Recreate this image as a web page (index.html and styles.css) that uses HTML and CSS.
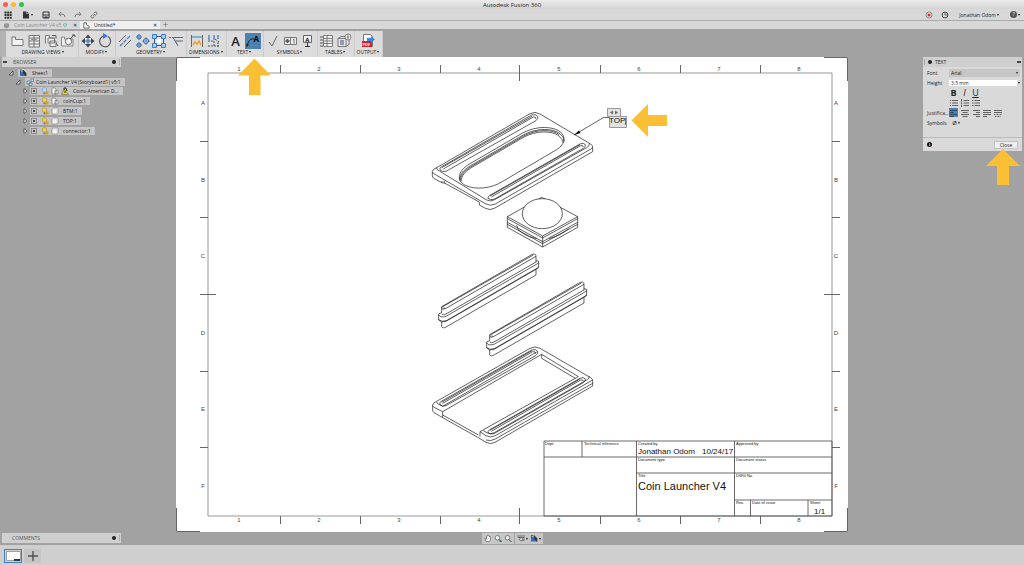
FILE: index.html
```html
<!DOCTYPE html>
<html lang="en">
<head>
  <meta charset="UTF-8">
  <title>Autodesk Fusion 360</title>
  <link rel="stylesheet" href="styles.css">
</head>
<body>
  <!-- shared icons -->
  <svg class="defs" aria-hidden="true">
    <symbol id="bulb" viewBox="0 0 8 8"><circle cx="3.4" cy="3" r="2.4" fill="#f4cf45" stroke="#8b8055" stroke-width=".5"/><path d="M2.5 5.5h2v1.8h-2z" fill="#777"/><path d="M4.5 4.5h3v3h-3z" fill="#d5a21d"/></symbol>
    <symbol id="bulb-off" viewBox="0 0 8 8"><circle cx="3.4" cy="3" r="2.4" fill="#bdd5f2" stroke="#6f86a8" stroke-width=".5"/><path d="M2.5 5.5h2v1.8h-2z" fill="#777"/><path d="M4.5 4.5h3v3h-3z" fill="#d5a21d"/></symbol>
    <symbol id="cube" viewBox="0 0 8 8"><path d="M1 2.2L2.3 1H7v4.8L5.8 7H1z" fill="#f5f5f5" stroke="#777" stroke-width=".6"/><path d="M1 2.3h4.7V7M5.7 2.3L7 1" fill="none" stroke="#ccc" stroke-width=".4"/></symbol>
    <symbol id="parts" viewBox="0 0 8 8"><path d="M1 1h3l1 1v5H1zM4 3.5h3V7H4z" fill="#f5f5f5" stroke="#666" stroke-width=".6"/></symbol>
    <symbol id="flag" viewBox="0 0 8 8"><path d="M1 1v6h6z" fill="#2b6fc4"/><path d="M1 1h2M1 3h1M4 1v3l3 3V4z" fill="#333" stroke="#333" stroke-width=".7"/></symbol>
    <symbol id="open" viewBox="0 0 6 6"><path d="M5 1v4H1z" fill="#ddd" stroke="#333" stroke-width=".7"/></symbol>
    <symbol id="shut" viewBox="0 0 6 6"><path d="M2 .6v4.8L5 3z" fill="#eee" stroke="#333" stroke-width=".7"/></symbol>
    <symbol id="lines" viewBox="0 0 8 8"><path d="M0 1.5h8M1.5 3.5h5M0 5.5h8M1.5 7.5h5" stroke="#444" stroke-width=".8"/></symbol>
  </svg>

  <header class="title-bar">
    <div class="lights"><i class="red"></i><i class="amber"></i><i class="green"></i></div>
    <h1>Autodesk Fusion 360</h1>
  </header>

  <div class="quick-bar">
    <button class="quick" aria-label="Data panel"><svg viewBox="0 0 8 8"><path d="M.5.5h2v2h-2zM3.1.5h2v2h-2zM5.7.5h2v2h-2zM.5 3.1h2v2h-2zM3.1 3.1h2v2h-2zM5.7 3.1h2v2h-2zM.5 5.7h2v2h-2zM3.1 5.7h2v2h-2zM5.7 5.7h2v2h-2z" fill="#333"/></svg></button>
    <button class="quick file" aria-label="File"><svg viewBox="0 0 8 8"><path d="M1 .5h3.5v2.6H7v4.4H1zM5.2.5L7 2.4H5.2z" fill="#333"/></svg><b class="caret"></b></button>
    <button class="quick" aria-label="Save"><svg viewBox="0 0 8 8"><path d="M1 1h6v6H1z" fill="none" stroke="#333" stroke-width="1"/><path d="M1 3.6h6v1H1zM2.5 5.5h3V7h-3z" fill="#333"/></svg></button>
    <button class="quick" aria-label="Undo"><svg viewBox="0 0 8 8"><path d="M3 1L1 3.2l2 2M1.2 3.2h3.5Q6.8 3.4 7 6" fill="none" stroke="#777" stroke-width="1"/></svg></button>
    <button class="quick" aria-label="Redo"><svg viewBox="0 0 8 8"><path d="M5 1l2 2.2-2 2M6.8 3.2H3.3Q1.2 3.4 1 6" fill="none" stroke="#777" stroke-width="1"/></svg></button>
    <button class="quick" aria-label="Link"><svg viewBox="0 0 8 8"><path d="M3.2 5l2-2M3.6 2.5L5 1.2q1-.6 1.7.2t0 1.7L5.2 4.5M4.4 5.5L3 6.8q-1 .6-1.7-.2t0-1.7l1.4-1.4" fill="none" stroke="#666" stroke-width=".9"/></svg></button>
    <div class="account">
      <button class="quick" aria-label="Record"><svg viewBox="0 0 8 8"><circle cx="4" cy="4" r="3" fill="#fff" stroke="#555" stroke-width=".7"/><circle cx="4" cy="4" r="1.6" fill="#e0242a"/></svg></button>
      <button class="quick" aria-label="Job status"><svg viewBox="0 0 8 8"><circle cx="4" cy="4" r="2.9" fill="none" stroke="#333" stroke-width=".9"/><path d="M4 2v2h2" fill="none" stroke="#333" stroke-width=".7"/></svg></button>
      <button class="user">Jonathan Odom <b class="caret"></b></button>
      <button class="help" aria-label="Help"><span>?</span><b class="caret"></b></button>
    </div>
  </div>

  <nav class="tabs">
    <a class="tab" href="#"><svg viewBox="0 0 8 8"><path d="M1 2l3-1 3 1v4L4 7.500 1 6z" fill="#999"/></svg><span>Coin Launcher V4 v5</span><i class="sync"></i><b>✕</b></a>
    <a class="tab active" href="#"><svg viewBox="0 0 8 8"><path d="M1 1v6h6V5L4 3V1z" fill="#fff" stroke="#444" stroke-width=".9"/></svg><span>Untitled*</span><b>✕</b></a>
    <button class="add-tab" aria-label="New tab">+</button>
  </nav>

  <div class="toolbar-row">
    <div class="toolbar">
      <section class="group">
        <div class="tools">
          <button aria-label="Base view"><svg viewBox="0 0 16 16"><path d="M3 12.500V4h3.500v2.500H14v6z" fill="#f1f1f1" stroke="#777"/></svg></button>
          <button aria-label="Projected view"><svg viewBox="0 0 16 16"><path d="M3 2.500h10.500v11.500H3z" fill="#eee" stroke="#777"/><path d="M3 5h10.500M3 8h10.500M3 11h10.500M8 2v12" stroke="#666" stroke-width=".9"/><path d="M5 6h6v1H5z" fill="#5b9bdc"/></svg></button>
          <button aria-label="Section view"><svg viewBox="0 0 16 16"><path d="M2.500 10.500v-8h4v2.500H11M5 5h6.500v5H5zM7 8h6v5.500H7z" fill="#eee" stroke="#777"/><path d="M9 2.500h4v3M13 10l2 3" fill="none" stroke="#555"/></svg></button>
          <button aria-label="Detail view"><svg viewBox="0 0 16 16"><path d="M1.500 13V4h3v2H13v7z" fill="#eee" stroke="#888"/><circle cx="8.500" cy="8.500" r="3.200" fill="#f4f4f4" stroke="#666"/><path d="M10.500 6l3-4M12 2h3v2" fill="none" stroke="#555"/></svg></button>
        </div>
        <button class="group-name">DRAWING VIEWS <b class="caret"></b></button>
      </section>
      <section class="group">
        <div class="tools">
          <button aria-label="Move"><svg viewBox="0 0 16 16"><path d="M8 3v10M3 8h10" stroke="#777"/><path d="M8 1.500L11 5H5zM8 14.500L11 11H5zM1.500 8L5 5v6zM14.500 8L11 5v6z" fill="#3c4654"/><path d="M6.500 6.500h3v3h-3z" fill="#4b8ed8"/></svg></button>
          <button aria-label="Rotate"><svg viewBox="0 0 16 16"><path d="M11 3.600A5.500 5.500 0 1 1 6 3.200" fill="none" stroke="#555" stroke-width="1.200"/><path d="M6 0l5 3-5 3z" fill="#2f7de0"/></svg></button>
        </div>
        <button class="group-name">MODIFY <b class="caret"></b></button>
      </section>
      <section class="group">
        <div class="tools">
          <button aria-label="Centerline"><svg viewBox="0 0 16 16"><path d="M2 9l7-7M7 14l7-7" stroke="#666"/><path d="M3 13L13 3" stroke="#2f7de0" stroke-width="1.200" stroke-dasharray="4 1"/></svg></button>
          <button aria-label="Center mark"><svg viewBox="0 0 16 16"><g fill="#dbe7f5" stroke="#4d5c70"><circle cx="5" cy="4" r="2"/><circle cx="12" cy="8" r="2.500"/><circle cx="5" cy="12" r="2"/></g><path d="M2 4h6M5 1v6M2 12h6M5 9v6M8 8h8M12 4v8" stroke="#2f7de0" stroke-width=".8"/></svg></button>
          <button aria-label="Center mark pattern"><svg viewBox="0 0 16 16"><path d="M3.500 3.500h9v9h-9z" fill="#ddd" stroke="#555"/><path d="M1.500 1.500h4v4h-4zM10.500 1.500h4v4h-4zM1.500 10.500h4v4h-4zM10.500 10.500h4v4h-4z" fill="#a9cdf5" stroke="#2f7de0"/><circle cx="8" cy="8" r="2.500" fill="#fff"/></svg></button>
          <button aria-label="Edge extension"><svg viewBox="0 0 16 16"><path d="M6 4.500h9M8 8h7M6 6l4 7" fill="none" stroke="#666"/><path d="M1 4.500h5M5 4.500l4 6" stroke="#2f7de0" stroke-dasharray="2 1"/></svg></button>
        </div>
        <button class="group-name">GEOMETRY <b class="caret"></b></button>
      </section>
      <section class="group">
        <div class="tools">
          <button aria-label="Dimension"><svg viewBox="0 0 16 16"><path d="M2.500 2v12M13.500 2v12" stroke="#666"/><path d="M3 4h10" stroke="#2f7de0"/><path d="M4 12l2-3 2 2 2-3 2 4" fill="none" stroke="#e4a52b" stroke-width="1.500"/></svg></button>
          <button aria-label="Ordinate"><svg viewBox="0 0 16 16"><path d="M3 2v5M8 2v5M12 2v4" stroke="#2f7de0" stroke-width="1.300"/><path d="M2 8h6v6M9 6l4 3M2 13h12M12 9v5" fill="none" stroke="#555" stroke-dasharray="2 1"/></svg></button>
        </div>
        <button class="group-name">DIMENSIONS <b class="caret"></b></button>
      </section>
      <section class="group">
        <div class="tools">
          <button class="letter">A</button>
          <button class="active" aria-label="Leader text"><svg viewBox="0 0 16 16"><path d="M2 13Q4 6 7 6h2" fill="none" stroke="#222"/><path d="M1.500 14.500l0-4 2.500 1z" fill="#222"/><text x="8.500" y="8.500" class="mini-a">A</text></svg></button>
        </div>
        <button class="group-name">TEXT <b class="caret"></b></button>
      </section>
      <section class="group">
        <div class="tools">
          <button aria-label="Surface texture"><svg viewBox="0 0 16 16"><path d="M4 9l3 4 5-10" fill="none" stroke="#666"/></svg></button>
          <button aria-label="Feature control frame"><svg viewBox="0 0 16 16"><path d="M2.500 4.500h12v7h-12zM8.500 4v8" fill="#eee" stroke="#777"/><circle cx="5.500" cy="8" r="1.500" fill="none" stroke="#333" stroke-width=".7"/><path d="M3.500 8h4M5.500 6v4M11 6.500h1v4" fill="none" stroke="#333" stroke-width=".7"/></svg></button>
          <button aria-label="Datum"><svg viewBox="0 0 16 16"><path d="M4.500 2.500h8v7h-8z" fill="#f3f3f3" stroke="#666"/><path d="M8.500 9.500V13M6 13.500h5" stroke="#333"/><text x="6.200" y="8.500" class="datum-a">A</text></svg></button>
        </div>
        <button class="group-name">SYMBOLS <b class="caret"></b></button>
      </section>
      <section class="group">
        <div class="tools">
          <button aria-label="Parts list"><svg viewBox="0 0 16 16"><path d="M4.500 2.500h9v11h-9zM4.500 5.500h9M4.500 8h9M4.500 10.500h9M8 2.500v11" fill="#f1f1f1" stroke="#666" stroke-width=".8"/><path d="M1 4h3M1 7h3M1 10h3M1 13h3" stroke="#555"/></svg></button>
          <button aria-label="Balloon"><svg viewBox="0 0 16 16"><path d="M2 5.500l3-2h8v8l-3 2H2zM2 5.500h8v8" fill="#e7e9ec" stroke="#777"/><path d="M4 7h4v5H4z" fill="#8c9bb0"/><circle cx="12" cy="4" r="3" fill="#eee" stroke="#666" stroke-width=".8"/><path d="M12 2.500v3" stroke="#333"/></svg></button>
        </div>
        <button class="group-name">TABLES <b class="caret"></b></button>
      </section>
      <section class="group">
        <div class="tools">
          <button aria-label="Output PDF"><svg viewBox="0 0 16 16"><path d="M3.500 1.500h7l2 2v10h-9z" fill="#fff" stroke="#777"/><path d="M2 8h10v6H2z" fill="#d3202a"/><path d="M7 5h4V3l4 3.500-4 3V8H7z" fill="#2f8be6"/><text x="2.500" y="13" class="pdf">PDF</text></svg></button>
        </div>
        <button class="group-name">OUTPUT <b class="caret"></b></button>
      </section>
    </div>
  </div>

  <main class="workspace">
    <aside class="left">
      <div class="browser">
        <div class="panel-head"><b class="collapse"></b><h2>BROWSER</h2><i class="dot"></i><i class="grip"></i></div>
        <ul class="tree">
          <li class="node"><svg><use href="#open"/></svg><span class="chip root"><svg class="ico"><use href="#flag"/></svg>Sheet1</span></li>
          <li class="node level-1"><svg><use href="#open"/></svg><span class="chip"><svg class="ico" viewBox="0 0 8 8"><path d="M1 3h3v3H1zM3 5h3v2.500H3zM5 1h2.500v2.500H5z" fill="#dce9f7" stroke="#3f6c9f" stroke-width=".7"/></svg>Coin Launcher V4 (Storyboard1) v5:1</span></li>
          <li>
            <ul class="children">
              <li class="node"><svg><use href="#shut"/></svg><label class="chip"><input type="checkbox" checked><svg class="ico"><use href="#bulb-off"/></svg><svg class="ico"><use href="#parts"/></svg><svg class="ico" viewBox="0 0 8 8"><path d="M.5 7.500L3 2l4.500 5.500z" fill="#e8d31d" stroke="#555" stroke-width=".5"/><path d="M3 3V1h2l1 3M4 4v2" fill="none" stroke="#222" stroke-width=".9"/></svg><span>Coins-American D...</span></label></li>
              <li class="node"><svg><use href="#shut"/></svg><label class="chip"><input type="checkbox" checked><svg class="ico"><use href="#bulb"/></svg><svg class="ico"><use href="#parts"/></svg><span>coinCup:1</span></label></li>
              <li class="node"><svg><use href="#shut"/></svg><label class="chip"><input type="checkbox" checked><svg class="ico"><use href="#bulb"/></svg><svg class="ico"><use href="#cube"/></svg><span>BTM:1</span></label></li>
              <li class="node"><svg><use href="#shut"/></svg><label class="chip"><input type="checkbox" checked><svg class="ico"><use href="#bulb"/></svg><svg class="ico"><use href="#cube"/></svg><span>TOP:1</span></label></li>
              <li class="node"><svg><use href="#shut"/></svg><label class="chip"><input type="checkbox" checked><svg class="ico"><use href="#bulb"/></svg><svg class="ico"><use href="#cube"/></svg><span>connector:1</span></label></li>
            </ul>
          </li>
        </ul>
      </div>
      <div class="panel-head comments"><h2>COMMENTS</h2><i class="dot"></i><i class="grip"></i></div>
    </aside>

    <div class="center">
      <svg class="sheet" viewBox="176 57 672 475">
        <path d="M176 57h672v475H176z" fill="#fff"/>
        <path class="crop" d="M200 57.500h-23.500V81M824 57.500h23.500V81M200 531.500h-23.500V508M824 531.500h23.500V508"/>
        <path class="frame" d="M208 73h624v443H208z"/>
        <path class="tick" d="M280.500 65v8M360.500 65v8M440.500 65v8M519.500 65v16M600.500 65v8M680.500 65v8M760.500 65v8M280.500 516v8M360.500 516v8M440.500 516v8M519.500 508v16M600.500 516v8M680.500 516v8M760.500 516v8"/>
        <path class="tick" d="M200 141.500h8M200 217.500h8M200 294.500h16M200 371.500h8M200 447.500h8M832 141.500h8M832 217.500h8M824 294.500h16M832 371.500h8M832 447.500h8"/>
        <g class="zone">
          <text x="239" y="71">1</text><text x="319" y="71">2</text><text x="399" y="71">3</text><text x="479" y="71">4</text><text x="559" y="71">5</text><text x="639" y="71">6</text><text x="719" y="71">7</text><text x="799" y="71">8</text>
          <text x="239" y="522">1</text><text x="319" y="522">2</text><text x="399" y="522">3</text><text x="479" y="522">4</text><text x="559" y="522">5</text><text x="639" y="522">6</text><text x="719" y="522">7</text><text x="799" y="522">8</text>
          <text x="203" y="105">A</text><text x="203" y="182">B</text><text x="203" y="258">C</text><text x="203" y="335">D</text><text x="203" y="411">E</text><text x="203" y="488">F</text>
          <text x="836" y="105">A</text><text x="836" y="182">B</text><text x="836" y="258">C</text><text x="836" y="335">D</text><text x="836" y="411">E</text><text x="836" y="488">F</text>
        </g>

        <!-- top plate and coin cup -->
        <g class="model" transform="translate(420 100) scale(.3333)">
          <path d="M37 214Q38 208 50 203L330 41Q345 33 360 42L512 132Q519 137 518 144V155L225 324Q210 333 196 325L178 315V306L75 250L66 248L41 235Q37 232 37 226Z"/>
          <path d="M50 203Q48 208 58 213L200 300Q212 306 224 299L500 143Q510 137 508 130M37 216Q39 221 50 226L196 311Q211 320 226 312L518 144M66 243V248M75 250L72 242"/>
          <path d="M62 202L335 45Q347 41 353 49Q356 56 348 62L78 214Q68 217 61 211Q58 206 62 202ZM70 207L340 51Q349 50 348 57M65 203L336 49"/>
          <path d="M208 287L480 132Q491 127 496 134Q498 140 490 145L222 298Q210 301 204 295Q203 290 208 287ZM214 291L482 137Q490 135 490 141M210 288L480 134"/>
          <path d="M118 232C118 216 130 203 150 191L308 99C350 76 402 78 424 98C438 114 434 134 410 149L250 243C214 267 164 270 136 256C121 248 118 241 118 232Z"/>
          <path d="M119 239C120 221 132 209 152 197L310 105C352 82 400 85 420 101Q432 111 433 124M123 245C124 228 134 215 154 203L312 111C350 91 396 92 416 107Q428 117 430 129M121 242C122 225 133 212 153 200L311 108C351 86 398 88 418 104"/>
          <path class="solid" d="M365 292L473 350V382L368 441L262 382V350Z"/>
          <path d="M262 350L368 408L473 350M262 356L368 414L473 356M262 367L368 425L473 367M262 373L368 431L473 373M368 408V441M290 376Q292 390 304 397Q325 412 350 416M386 416Q420 408 446 386"/>
          <ellipse cx="367" cy="341" rx="60" ry="45"/>
        </g>

        <!-- connector rails and bottom plate -->
        <g class="model" transform="translate(420 240) scale(.3333)">
          <g id="rail">
            <path d="M65 200L335 44Q346 39 348 47V62L356 64V82L348 88V105L80 260Q68 267 65 260V246L56 240V222L65 218Z"/>
            <path d="M65 206Q70 210 78 205L348 49M65 202L340 45M65 222Q70 226 78 222L348 66M56 225Q62 234 78 229L356 69M56 239Q65 247 79 242L356 82M348 62V67M65 246L78 244L348 88M72 207V202"/>
          </g>
          <use href="#rail" transform="translate(144 84)"/>
          <path class="solid" d="M38 495Q40 488 50 484L330 325Q345 317 360 325L512 413Q519 418 518 424V438L225 607Q212 615 198 607L175 593L68 533L42 518Q38 516 38 510Z"/>
          <path d="M38 498Q42 503 54 508L68 515L365 343L475 410L180 575V590M50 486Q50 491 60 495L68 499L350 336M68 515V525L175 585M180 575L198 587Q212 595 226 587L518 420M365 343V355L466 415M190 572L202 579Q212 584 223 578L500 420Q510 414 508 409M198 600Q212 605 226 597L518 430M68 525V533"/>
          <path d="M62 485L335 330Q348 326 353 334Q355 341 347 347L78 497Q66 501 60 494Q58 488 62 485ZM68 490L338 335Q348 334 347 341M65 487L336 332"/>
          <path d="M208 570L480 415Q491 410 496 417Q498 423 490 428L222 581Q210 584 204 578Q203 573 208 570ZM214 574L482 420Q490 418 490 424M210 571L480 417"/>
        </g>

        <path d="M574 135L603.500 117.500H609" class="leader"/>
        <path d="M574 135l5-4.500 1.500 2.500z"/>
        <path d="M607.500 108.500h13v8h-13zM609.500 116.500h17v11h-17z" fill="#e2e2e2" stroke="#999"/>
        <path d="M610 112.500l3-2v4zM618 112.500l-3-2v4z" fill="#666"/>
        <text x="609" y="123" class="note">TOP</text>
        <path d="M625.500 118v7" stroke="#222" stroke-width=".6"/>

        <!-- title block -->
        <path class="block" d="M544 441h288v75H544zM544 457h288M582 441v16M636.500 441v75M734.500 441v75M636.500 473H832M734.500 500H832M750.500 500v16M808 500v16"/>
        <g class="field">
          <text x="545" y="445">Dept.</text><text x="584" y="445">Technical reference</text><text x="638" y="445">Created by</text><text x="736" y="445">Approved by</text>
          <text x="638" y="461">Document type</text><text x="736" y="461">Document status</text>
          <text x="638" y="477">Title</text><text x="736" y="477">DWG No.</text>
          <text x="736" y="504">Rev.</text><text x="752" y="504">Date of issue</text><text x="810" y="504">Sheet</text>
        </g>
        <g class="value"><text x="638" y="454">Jonathan Odom</text><text x="702" y="454">10/24/17</text><text x="814" y="514">1/1</text></g>
        <text x="638" y="490" class="drawing-title">Coin Launcher V4</text>

        <path class="pointer" d="M254.500 58.500L271 75.500H260.500V95H249V75.500H238Z"/>
        <path class="pointer" d="M631.500 120.500L648 104V115H667V126H648V137Z"/>
      </svg>
      <div class="nav-bar">
        <div class="nav-group">
          <button aria-label="Pan"><svg viewBox="0 0 8 8"><path d="M2 7L.8 4l1-.3.7 1V1.500h1V1h1v.5h1v.7h1V5L5.500 7z" fill="#eee" stroke="#555" stroke-width=".6"/></svg></button>
          <button aria-label="Zoom window"><svg viewBox="0 0 8 8"><circle cx="3.500" cy="3.300" r="2.300" fill="#f5f5f5" stroke="#555" stroke-width=".7"/><path d="M5 5l2.500 2.500" stroke="#333"/><path d="M5.500 5.500h2v2h-2z" fill="#3a8a55"/></svg></button>
          <button aria-label="Zoom"><svg viewBox="0 0 8 8"><circle cx="3.500" cy="3.300" r="2.300" fill="#eee" stroke="#555" stroke-width=".7"/><path d="M5 5l2.500 2.500" stroke="#333"/></svg></button>
        </div>
        <div class="nav-group">
          <button aria-label="Display"><svg viewBox="0 0 8 8"><path d="M0 1.500h8M1 3h6v3H3.500L2 4.500" fill="none" stroke="#555" stroke-width=".8"/><circle cx="4" cy="4.800" r="1.500" fill="#ddd" stroke="#555" stroke-width=".6"/></svg><b class="caret"></b></button>
          <button aria-label="Sheet settings"><svg><use href="#flag"/></svg><b class="caret"></b></button>
        </div>
      </div>
    </div>

    <aside class="right">
      <form class="text-panel">
        <div class="panel-head"><i class="grip"></i><i class="dot"></i><h2>TEXT</h2><b class="collapse"></b></div>
        <div class="fields">
          <label for="font">Font</label>
          <span class="picker"><select id="font"><option>Arial</option></select><b class="caret"></b></span>
          <label for="height">Height</label>
          <span class="height"><input id="height" type="text" value="3.5 mm"><b class="caret"></b></span>
          <span></span>
          <div class="row style"><button type="button"><b>B</b></button><button type="button"><em>I</em></button><button type="button"><u>U</u></button></div>
          <span></span>
          <div class="row">
            <button type="button" aria-label="Bullets"><svg viewBox="0 0 8 8"><path d="M0 1.500h1M2 1.500h6M0 4h1M2 4h6M0 6.500h1M2 6.500h6" stroke="#444" stroke-width=".8"/></svg></button>
            <button type="button" aria-label="Numbers"><svg viewBox="0 0 8 8"><path d="M.5 0v2.500M.5 3v2M.5 5.500V8M2.500 1.500H8M2.500 4H8M2.500 6.500H8" stroke="#444" stroke-width=".8"/></svg></button>
            <button type="button" aria-label="Letters"><svg viewBox="0 0 8 8"><path d="M0 1.500h1.500M2.500 1.500H8M0 4h1.500M2.500 4H8M0 6.500h1.500M2.500 6.500H8" stroke="#444" stroke-width=".8"/></svg></button>
          </div>
          <span class="cut">Justifica...</span>
          <div class="row">
            <button type="button" class="active" aria-label="Left"><svg viewBox="0 0 8 8"><path d="M0 1.500h7M0 3.500h4M0 5.500h7M0 7.500h4" stroke="#263b50" stroke-width=".8"/></svg></button>
            <button type="button" aria-label="Center"><svg><use href="#lines"/></svg></button>
            <button type="button" aria-label="Right"><svg viewBox="0 0 8 8"><path d="M1 1.500h7M4 3.500h4M1 5.500h7M4 7.500h4" stroke="#444" stroke-width=".8"/></svg></button>
            <button type="button" aria-label="Justify"><svg viewBox="0 0 8 8"><path d="M0 1.500h8M0 3.500h8M0 5.500h8M0 7.500h4" stroke="#444" stroke-width=".8"/></svg></button>
            <button type="button" aria-label="Distribute"><svg viewBox="0 0 8 8"><path d="M0 1.500h8M0 3.500h8" stroke="#444" stroke-width=".8"/><path d="M0 5.500h8M1 7.500h6" stroke="#444" stroke-width=".8" stroke-dasharray="1 .5"/></svg></button>
          </div>
          <span>Symbols</span>
          <div class="row"><button type="button" class="symbol">Ø <b class="caret"></b></button></div>
        </div>
        <div class="panel-foot"><span class="info">i</span><button type="button" class="close">Close</button></div>
      </form>
      <svg class="close-pointer" viewBox="0 0 34 36"><path class="pointer" d="M17 0L34 17H23V36H11V17H0Z"/></svg>
    </aside>
  </main>

  <footer class="sheets">
    <button class="thumb" aria-label="Sheet 1"><svg viewBox="0 0 15 10"><path d="M0 0h15v10H0z" fill="#fff"/><path d="M.5.5h14v9H.5z" fill="none" stroke="#777" stroke-width=".7"/><path d="M8 8h6v2H8z" fill="#333"/></svg></button>
    <button class="add-sheet" aria-label="Add sheet"><svg viewBox="0 0 10 10"><path d="M5 0v10M0 5h10" stroke="#555" stroke-width="1.500"/></svg></button>
  </footer>
</body>
</html>
```

FILE: styles.css
```css
* {
  box-sizing: border-box;
}
body {
  margin: 0;
  min-height: 100vh;
  display: flex;
  flex-direction: column;
  background: #a2a2a2;
  color: #222;
  font-family: "Open Sans", "Noto Sans", sans-serif;
  font-size: 5px;
  line-height: 8px;
}
button, input, select {
  font: inherit;
  color: inherit;
  border: 0;
  margin: 0;
  padding: 0;
  background: none;
  border-radius: 0;
}
button {
  display: flex;
  align-items: center;
  justify-content: center;
}
h1, h2, ul {
  margin: 0;
  padding: 0;
  font-size: 5px;
  font-weight: normal;
  list-style: none;
}
svg {
  display: block;
  flex: none;
}
.defs {
  position: absolute;
  width: 0;
  height: 0;
}
.caret {
  display: inline-block;
  border: 1px solid transparent;
  border-top: 2px solid #222;
  border-bottom: 0;
  margin-left: 1px;
  vertical-align: middle;
}

/* window bars */
.title-bar {
  display: grid;
  grid-template-columns: 1fr auto 1fr;
  align-items: center;
  height: 9px;
  background: linear-gradient(#ebebeb, #d3d3d3);
}
.title-bar h1 {
  font-size: 6px;
}
.lights {
  display: flex;
  gap: 3px;
  padding-left: 3px;
}
.lights i {
  width: 5px;
  height: 5px;
  border-radius: 50%;
}
.red { background: #fc5b57; }
.amber { background: #fdbc2e; }
.green { background: #28c940; }
.quick-bar {
  display: flex;
  align-items: center;
  gap: 8px;
  height: 12px;
  padding: 0 4px;
  background: #d8d8d8;
  border-bottom: 1px solid #aaa;
}
.quick svg {
  width: 8px;
  height: 8px;
}
.file {
  margin: 0 1px 0 2px;
}
.account {
  display: flex;
  align-items: center;
  gap: 8px;
  margin-left: auto;
}
.user {
  margin: 0 3px 0 2px;
}
.help span {
  width: 7px;
  border-radius: 50%;
  background: #555;
  color: #fff;
  line-height: 7px;
}
.tabs {
  display: flex;
  height: 8px;
  background: #d8d8d8;
}
.tab {
  display: flex;
  align-items: center;
  width: 80px;
  padding: 0 3px;
  gap: 2px;
  color: #888;
  text-decoration: none;
}
.tab span {
  margin-left: 2px;
  white-space: nowrap;
}
.tab svg {
  width: 7px;
  height: 7px;
}
.tab b {
  margin-left: auto;
  color: #555;
}
.tab.active {
  background: #efefef;
  color: #222;
}
.sync {
  width: 4px;
  height: 4px;
  border: 1px solid #6cc5ab;
  border-radius: 50%;
}
.add-tab {
  width: 11px;
  font-size: 9px;
  color: #666;
}

/* toolbar */
.toolbar-row {
  display: flex;
  padding-top: 2px;
}
.toolbar {
  display: flex;
  height: 26px;
  padding-left: 2px;
  border-left: 6px solid #b2b2b2;
  background: #dcdcdc;
}
.group {
  display: flex;
  flex-direction: column;
  align-items: center;
  padding: 2px 2px 0 1px;
  border-right: 1px solid #cacaca;
}
.tools {
  display: flex;
  gap: 1px;
}
.tools button, .tools svg {
  width: 16px;
  height: 16px;
}
.tools .active, .row .active {
  background: #4d82b0;
}
.tools .letter {
  font-size: 13px;
  font-weight: 600;
  line-height: 16px;
}
.group-name {
  padding: 0 1px;
  line-height: 6px;
  white-space: nowrap;
}
.mini-a, .datum-a {
  font: bold 8px "Open Sans", sans-serif;
}
.datum-a {
  font-size: 6px;
}
.pdf {
  font: bold 4px "Open Sans", sans-serif;
  fill: #fff;
}

/* workspace */
.workspace {
  flex: 1;
  display: grid;
  grid-template-columns: 11fr 42fr 11fr;
}
.left {
  display: flex;
  flex-direction: column;
  justify-content: space-between;
  padding: 0 0 2px 2px;
}
.panel-head {
  display: flex;
  align-items: center;
  gap: 3px;
  height: 10px;
  padding: 0 1px;
  background: #d0d0d0;
}
.left .panel-head {
  width: 119px;
}
.left h2 {
  margin-left: 3px;
  margin-right: auto;
  color: #555;
}
.comments h2 {
  margin-left: 9px;
}
.collapse {
  width: 4px;
  height: 2px;
  background: #444;
}
.dot {
  width: 4px;
  height: 4px;
  border-radius: 50%;
  background: #222;
}
.grip {
  width: 1px;
  height: 6px;
  background: #aaa;
}
.tree {
  padding: 1px 0 0 6px;
}
.node {
  display: flex;
  align-items: center;
  gap: 4px;
  height: 9px;
}
.node > svg {
  width: 6px;
  height: 6px;
}
.level-1 {
  padding-left: 7px;
}
.children {
  padding-left: 14px;
}
.children .node {
  height: 10px;
}
.children .node > svg {
  margin-right: -2px;
}
.chip {
  display: flex;
  align-items: center;
  gap: 2px;
  height: 8px;
  padding: 0 4px 0 1px;
  background: #c5c5c5;
  white-space: nowrap;
}
.root {
  gap: 5px;
}
.chip span {
  margin-left: 2px;
}
.ico {
  width: 8px;
  height: 8px;
}
.chip input {
  appearance: none;
  display: grid;
  place-items: center;
  width: 6px;
  height: 6px;
  margin: 0 2px 0 0;
  border: 1px solid #888;
  background: #ccc;
}
.chip input:checked::before {
  content: "";
  width: 2px;
  height: 2px;
  background: #444;
}
.center {
  display: flex;
  flex-direction: column;
}
.nav-bar {
  display: flex;
  justify-content: center;
  gap: 1px;
  padding-top: 1px;
}
.nav-group {
  display: flex;
  gap: 2px;
  padding: 1px 2px;
  background: #c6c6c6;
}
.nav-group svg {
  width: 8px;
  height: 9px;
}

/* drawing sheet */
.crop, .frame, .tick, .block, .leader {
  fill: none;
  stroke: #666;
}
.frame {
  stroke: #999;
}
.block {
  stroke: #444;
  stroke-width: .8;
}
.leader {
  stroke: #222;
  stroke-width: .7;
}
.zone, .field, .value, .drawing-title, .note {
  font-family: "Liberation Sans", Arial, sans-serif;
  fill: #111;
}
.zone {
  font-size: 6px;
  text-anchor: middle;
  fill: #444;
}
.field {
  font-size: 4px;
}
.value, .note {
  font-size: 8px;
}
.drawing-title {
  font-size: 11px;
}
.model {
  fill: #fff;
  stroke: #111;
  stroke-width: 2;
  stroke-linejoin: round;
}
.model path + path {
  fill: none;
}
.model .solid {
  fill: #fff;
}
.pointer {
  fill: #fbbf36;
}

/* text panel */
.right {
  display: flex;
  flex-direction: column;
  align-items: flex-end;
  padding: 0 2px;
}
.text-panel {
  width: 99px;
  background: #d9d9d9;
}
.text-panel .collapse {
  margin-left: auto;
}
.fields {
  display: grid;
  grid-template-columns: 21px 1fr;
  grid-auto-rows: 9px;
  row-gap: 1px;
  column-gap: 1px;
  align-items: center;
  padding: 1px 5px 10px 4px;
}
.cut {
  white-space: nowrap;
}
.picker, .height {
  display: flex;
  align-items: center;
}
.picker {
  background: #c6c6c6;
  padding-right: 2px;
}
.picker select, .height input {
  appearance: none;
  flex: 1;
  min-width: 0;
  height: 8px;
  padding-left: 2px;
}
.height input {
  height: 6px;
  background: #fff;
}
.row {
  display: flex;
  gap: 2px;
}
.row button {
  width: 9px;
  height: 9px;
}
.row svg {
  width: 8px;
  height: 8px;
}
.style {
  font-size: 9px;
}
.row .symbol {
  width: 14px;
  font-size: 6px;
}
.panel-foot {
  display: flex;
  align-items: center;
  justify-content: space-between;
  height: 14px;
  padding: 0 4px;
  border-top: 1px solid #bbb;
}
.info {
  width: 5px;
  height: 5px;
  border-radius: 50%;
  background: #111;
  color: #fff;
  font-size: 4px;
  font-weight: bold;
  line-height: 5px;
  text-align: center;
}
.close {
  width: 24px;
  height: 8px;
  background: #eee;
  border: 1px solid #c2c2c2;
}
.close-pointer {
  width: 34px;
  height: 36px;
  margin: -2px 2px 0 0;
  z-index: 1;
}

/* sheet strip */
.sheets {
  display: flex;
  align-items: center;
  gap: 2px;
  height: 20px;
  padding: 2px 4px 0;
  background: #cfcfcf;
}
.thumb {
  width: 18px;
  height: 14px;
  border: 1px solid #3a83cb;
}
.thumb svg {
  width: 15px;
  height: 10px;
}
.add-sheet {
  width: 17px;
  height: 14px;
  background: #c5c5c5;
}
.add-sheet svg {
  width: 10px;
  height: 10px;
}
```
